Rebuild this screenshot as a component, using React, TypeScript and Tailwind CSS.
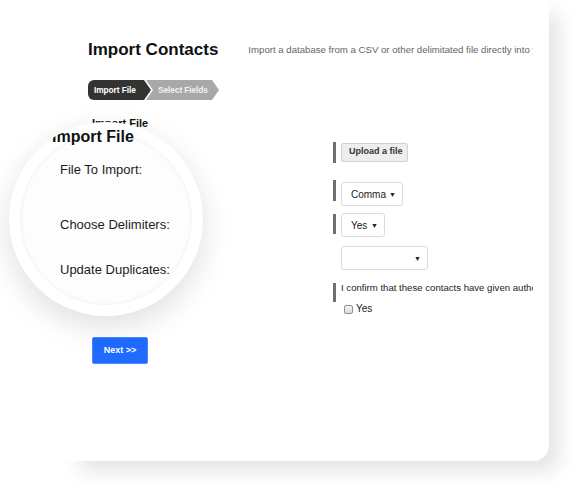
import React from "react";

const font = { fontFamily: '"Liberation Sans", Arial, sans-serif' };

function Bar({ cls }: { cls: string }) {
  return <div className={`w-[3px] shrink-0 bg-[#6f6f6f] ${cls}`} />;
}

function FakeSelect({ width, label, arrowRight }: { width: string; label?: string; arrowRight: string }) {
  return (
    <div className={`relative h-[24px] ${width} shrink-0 rounded-[3px] border border-[#dcdcdc] bg-white`}>
      {label ? (
        <span className="absolute left-[9px] top-[6px] text-[10px] leading-[12px] text-[#222]">{label}</span>
      ) : null}
      <span className={`absolute ${arrowRight} top-[7px] text-[7px] leading-[9px] text-[#222]`}>▼</span>
    </div>
  );
}

export default function App() {
  return (
    <div className="relative h-[492px] w-[579px] overflow-hidden bg-white" style={font}>
      {/* Card */}
      <div className="ml-[66px] h-[461px] w-[483px] rounded-br-[16px] bg-white shadow-[12px_12px_20px_-2px_rgba(0,0,0,0.11)]">
        <div className="ml-[22px] h-full w-[445px] overflow-hidden whitespace-nowrap pt-[37px]">
          {/* header */}
          <div className="flex h-[25px] items-center">
            <div className="text-[17px] font-bold leading-[25px] text-[#111]">Import Contacts</div>
            <div className="ml-[16px] h-[25px] w-px bg-[#dedede]" />
            <div className="ml-[14px] text-[9.65px] leading-[12px] text-[#666]">
              Import a database from a CSV or other delimitated file directly into your account
            </div>
          </div>

          {/* breadcrumb */}
          <div className="mt-[18px] flex h-[20px] items-stretch">
            <div className="flex w-[63px] items-center rounded-l-[6px] bg-[#333] pl-[6px] text-[8.4px] font-bold tracking-[-0.1px] text-white [clip-path:polygon(0_0,calc(100%-7px)_0,100%_50%,calc(100%-7px)_100%,0_100%)]">
              Import File
            </div>
            <div className="-ml-[5px] flex w-[73px] items-center bg-[#a8a8a8] pl-[12px] text-[8.4px] font-bold tracking-[-0.1px] text-[#f2f2f2] [clip-path:polygon(0_0,calc(100%-7px)_0,100%_50%,calc(100%-7px)_100%,0_100%,7px_50%)]">
              Select Fields
            </div>
          </div>

          {/* form */}
          <div className="mt-[5px] flex h-[232px]">
            <div className="ml-[4px] w-[241px] shrink-0">
              <div className="mt-[11px] text-[11px] font-bold leading-[14px] text-[#111]">Import File</div>
            </div>
            <div className="flex flex-col">
              <div className="mt-[36px] flex h-[22px] items-center">
                <Bar cls="h-[21px]" />
                <div className="ml-[5px] flex h-[19px] w-[67px] items-center rounded-[2px] border border-[#d2d2d2] bg-[#eeeeee] pl-[7px] text-[9px] font-bold text-[#333]">
                  Upload a file
                </div>
              </div>
              <div className="mt-[17px] flex items-start">
                <Bar cls="h-[21px]" />
                <div className="ml-[5px] mt-[2px]">
                  <FakeSelect width="w-[62px]" label="Comma" arrowRight="right-[6px]" />
                </div>
              </div>
              <div className="mt-[7px] flex items-start">
                <Bar cls="mt-[1px] h-[20px]" />
                <div className="ml-[5px]">
                  <FakeSelect width="w-[44px]" label="Yes" arrowRight="right-[6px]" />
                </div>
              </div>
              <div className="ml-[8px] mt-[9px]">
                <FakeSelect width="w-[87px]" arrowRight="right-[6px]" />
              </div>
              <div className="mt-[12px] flex items-start">
                <Bar cls="mt-[1px] h-[19px]" />
                <div className="ml-[5px] text-[9.6px] leading-[12px] text-[#222]">
                  I confirm that these contacts have given authorisation to be contacted
                </div>
              </div>
              <div className="ml-[11px] mt-[1px] flex items-center">
                <div className="h-[9px] w-[9px] rounded-[2px] border border-[#8f8f8f] bg-gradient-to-b from-[#f4f4f4] to-[#dcdcdc]" />
                <span className="ml-[3px] text-[10px] leading-[12px] text-[#222]">Yes</span>
              </div>
            </div>
          </div>

          {/* next */}
          <div className="ml-[4px] flex h-[27px] w-[56px] items-center justify-center rounded-[2px] border border-[#4a88ff] bg-[#1f6bff] text-[9px] font-bold text-white">
            Next &gt;&gt;
          </div>
        </div>
      </div>

      {/* Magnifier */}
      <div className="absolute left-[9px] top-[122px] h-[194px] w-[194px] overflow-hidden rounded-full bg-white shadow-[0_10px_30px_rgba(0,0,0,0.13)]">
        <div className="absolute inset-[11px] rounded-full border border-[#f3f3f3] bg-[#fdfdfd] shadow-[inset_0_0_5px_rgba(0,0,0,0.03)]" />
        <div className="absolute left-[43px] top-[7px] text-[16px] font-bold leading-[16px] text-[#111]">Import File</div>
        <div className="absolute left-[51px] top-[41px] text-[13px] leading-[13px] text-[#1c1c1c]">File To Import:</div>
        <div className="absolute left-[51px] top-[96px] text-[13px] leading-[13px] text-[#1c1c1c]">Choose Delimiters:</div>
        <div className="absolute left-[51px] top-[141px] text-[13px] leading-[13px] text-[#1c1c1c]">Update Duplicates:</div>
      </div>
    </div>
  );
}
